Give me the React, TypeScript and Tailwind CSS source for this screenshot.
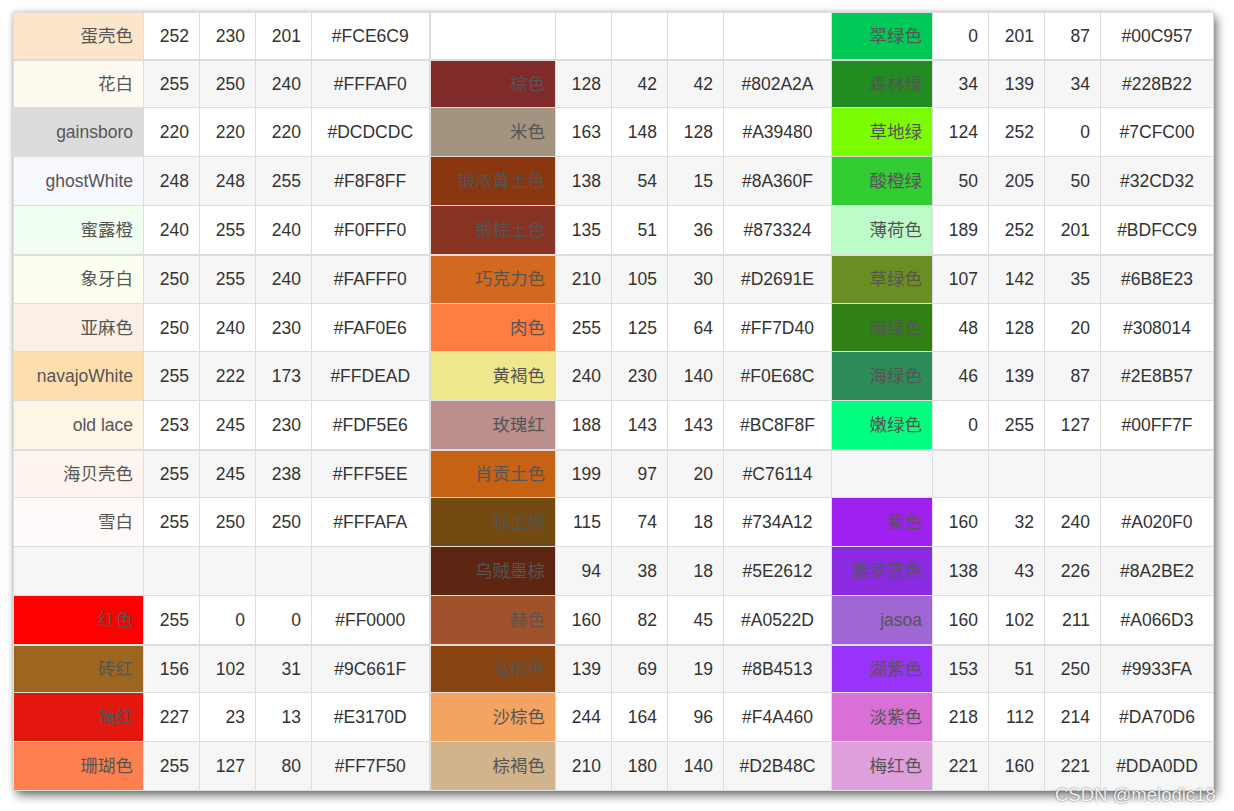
type Row = [string, number, number, number, string] | null

const left: Row[] = [
  ['蛋壳色', 252, 230, 201, '#FCE6C9'],
  ['花白', 255, 250, 240, '#FFFAF0'],
  ['gainsboro', 220, 220, 220, '#DCDCDC'],
  ['ghostWhite', 248, 248, 255, '#F8F8FF'],
  ['蜜露橙', 240, 255, 240, '#F0FFF0'],
  ['象牙白', 250, 255, 240, '#FAFFF0'],
  ['亚麻色', 250, 240, 230, '#FAF0E6'],
  ['navajoWhite', 255, 222, 173, '#FFDEAD'],
  ['old lace', 253, 245, 230, '#FDF5E6'],
  ['海贝壳色', 255, 245, 238, '#FFF5EE'],
  ['雪白', 255, 250, 250, '#FFFAFA'],
  null,
  ['红色', 255, 0, 0, '#FF0000'],
  ['砖红', 156, 102, 31, '#9C661F'],
  ['镉红', 227, 23, 13, '#E3170D'],
  ['珊瑚色', 255, 127, 80, '#FF7F50'],
]

const middle: Row[] = [
  null,
  ['棕色', 128, 42, 42, '#802A2A'],
  ['米色', 163, 148, 128, '#A39480'],
  ['锻浓黄土色', 138, 54, 15, '#8A360F'],
  ['锻棕土色', 135, 51, 36, '#873324'],
  ['巧克力色', 210, 105, 30, '#D2691E'],
  ['肉色', 255, 125, 64, '#FF7D40'],
  ['黄褐色', 240, 230, 140, '#F0E68C'],
  ['玫瑰红', 188, 143, 143, '#BC8F8F'],
  ['肖贡土色', 199, 97, 20, '#C76114'],
  ['标土棕', 115, 74, 18, '#734A12'],
  ['乌贼墨棕', 94, 38, 18, '#5E2612'],
  ['赫色', 160, 82, 45, '#A0522D'],
  ['马棕色', 139, 69, 19, '#8B4513'],
  ['沙棕色', 244, 164, 96, '#F4A460'],
  ['棕褐色', 210, 180, 140, '#D2B48C'],
]

const right: Row[] = [
  ['翠绿色', 0, 201, 87, '#00C957'],
  ['森林绿', 34, 139, 34, '#228B22'],
  ['草地绿', 124, 252, 0, '#7CFC00'],
  ['酸橙绿', 50, 205, 50, '#32CD32'],
  ['薄荷色', 189, 252, 201, '#BDFCC9'],
  ['草绿色', 107, 142, 35, '#6B8E23'],
  ['暗绿色', 48, 128, 20, '#308014'],
  ['海绿色', 46, 139, 87, '#2E8B57'],
  ['嫩绿色', 0, 255, 127, '#00FF7F'],
  null,
  ['紫色', 160, 32, 240, '#A020F0'],
  ['紫罗蓝色', 138, 43, 226, '#8A2BE2'],
  ['jasoa', 160, 102, 211, '#A066D3'],
  ['湖紫色', 153, 51, 250, '#9933FA'],
  ['淡紫色', 218, 112, 214, '#DA70D6'],
  ['梅红色', 221, 160, 221, '#DDA0DD'],
]

const widths = [130, 56, 56, 56, 118, 126, 56, 56, 56, 108, 101, 56, 56, 56, 113]

// row heights measured off the screenshot
const heights = [
  'h-[47px]', 'h-[48px]', 'h-[49px]', 'h-[49px]',
  'h-[49px]', 'h-[49px]', 'h-[48px]', 'h-[49px]',
  'h-[49px]', 'h-[48px]', 'h-[49px]', 'h-[49px]',
  'h-[49px]', 'h-[48px]', 'h-[49px]', 'h-[49px]',
]

function Group({ row, first }: { row: Row; first?: boolean }) {
  const edge = first ? 'border-l-2' : ''
  if (!row) {
    return (
      <>
        <td className={`border border-[#dddddd] ${edge}`}></td>
        <td className="border border-[#dddddd]"></td>
        <td className="border border-[#dddddd]"></td>
        <td className="border border-[#dddddd]"></td>
        <td className="border border-[#dddddd]"></td>
      </>
    )
  }
  const [name, r, g, b, hex] = row
  return (
    <>
      <td
        className={`border border-[#dddddd] ${edge} pr-[10px] text-right text-[#555555]`}
        style={{ backgroundColor: hex }}
      >
        {name}
      </td>
      <td className="border border-[#dddddd] pr-[10px] text-right">{r}</td>
      <td className="border border-[#dddddd] pr-[10px] text-right">{g}</td>
      <td className="border border-[#dddddd] pr-[10px] text-right">{b}</td>
      <td className="border border-[#dddddd] text-center">{hex}</td>
    </>
  )
}

export default function App() {
  const groups = [[0], [1, 2, 3, 4], [5, 6, 7, 8], [9, 10, 11, 12], [13, 14, 15]]
  return (
    <div className="relative w-[1234px] h-[811px] bg-white overflow-hidden">
      <div className="pt-[12px] pl-[13px]">
        <div className="w-[1200px] shadow-[0_0_5px_rgba(0,0,0,0.2),4px_5px_9px_rgba(0,0,0,0.5)]">
          <table
            className="w-[1200px] table-fixed border-collapse text-[17.5px] text-[#333333] leading-[20px]"
            style={{ fontFamily: '"Liberation Sans", "Noto Sans CJK SC", sans-serif' }}
          >
            <colgroup>
              {widths.map((w, i) => (
                <col key={i} style={{ width: w }} />
              ))}
            </colgroup>
            {groups.map((rows, gi) => (
              <tbody key={gi} className={gi > 0 ? 'border-t-2 border-[#dddddd]' : ''}>
                {rows.map((i) => (
                  <tr key={i} className={`${heights[i]} ${i % 2 === 1 ? 'bg-[#f6f6f6]' : 'bg-white'}`}>
                    <Group row={left[i]} />
                    <Group row={middle[i]} first />
                    <Group row={right[i]} />
                  </tr>
                ))}
              </tbody>
            ))}
          </table>
        </div>
      </div>
      <div
        className="absolute left-[1055px] top-[781px] text-[18.5px] text-white/90 [text-shadow:0_0_2px_rgba(0,0,0,0.6)]"
        style={{ fontFamily: '"Liberation Sans", sans-serif' }}
      >
        CSDN @melodic18
      </div>
    </div>
  )
}
